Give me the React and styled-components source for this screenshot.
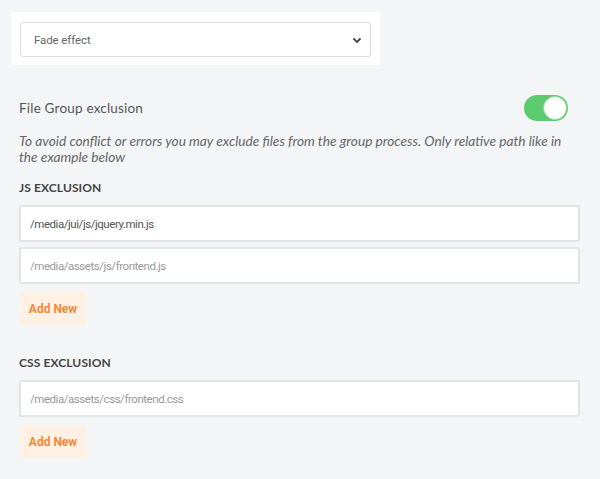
import React from "react";
import styled, { createGlobalStyle } from "styled-components";

const GlobalStyle = createGlobalStyle`
  html, body {
    margin: 0;
    padding: 0;
    background: #f4f5f7;
  }
  body {
    font-family: Lato, "Open Sans", sans-serif;
  }
`;

const Page = styled.div`
  width: 600px;
  height: 479px;
  box-sizing: border-box;
  padding: 12px 20px 0 19px;
  display: flex;
  flex-direction: column;
`;

const SelectCard = styled.div`
  margin-left: -8px;
  width: 369px;
  box-sizing: border-box;
  padding: 10px 9px 8px 9px;
  background: #fff;
`;

const SelectBox = styled.div`
  height: 35px;
  box-sizing: border-box;
  border: 1px solid #dcdcdc;
  border-radius: 3px;
  display: flex;
  align-items: center;
  justify-content: space-between;
  padding: 0 8px 0 13px;
  font-family: Roboto, sans-serif;
  font-size: 11.5px;
  letter-spacing: -0.1px;
  color: #666;
  background: #fff;
`;

const SwitchRow = styled.div`
  margin-top: 30px;
  display: flex;
  align-items: center;
  justify-content: space-between;
  padding-right: 12px;
`;

const Label = styled.div`
  font-size: 13.5px;
  color: #555;
  letter-spacing: 0.2px;
`;

const Toggle = styled.div`
  width: 44px;
  height: 26px;
  border-radius: 13px;
  background: #5ccb6f;
  position: relative;
  &::after {
    content: "";
    position: absolute;
    right: 1px;
    top: 1px;
    width: 22px;
    height: 22px;
    border-radius: 50%;
    background: #fff;
    border: 1px solid #8fdc9b;
  }
`;

const Help = styled.p`
  margin: 12px 0 0 0;
  max-width: 550px;
  font-style: italic;
  font-size: 13.7px;
  line-height: 16px;
  color: #666;
`;

const SectionTitle = styled.div`
  margin-top: ${(p) => p.$top}px;
  font-size: 12px;
  font-weight: 700;
  color: #444;
  letter-spacing: 0.1px;
`;

const Inputs = styled.div`
  display: flex;
  flex-direction: column;
  gap: 5px;
  margin-top: 10px;
`;

const Field = styled.div`
  height: 37px;
  box-sizing: border-box;
  border: 2px solid #e3e4e6;
  border-radius: 2px;
  background: #fff;
  display: flex;
  align-items: center;
  padding-left: 9px;
  font-family: Roboto, sans-serif;
  font-size: 11.5px;
  letter-spacing: -0.45px;
  color: ${(p) => (p.$placeholder ? "#9a9a9a" : "#555")};
`;

const AddButton = styled.button`
  align-self: flex-start;
  margin-top: 8px;
  margin-left: 1px;
  width: 66px;
  height: 33px;
  border: none;
  border-radius: 3px;
  background: #fff0e4;
  color: #f5883a;
  font-family: Roboto, sans-serif;
  font-weight: 700;
  font-size: 12px;
  padding: 0;
`;

function Chevron() {
  return (
    <svg width="10" height="8" viewBox="0 0 10 8">
      <path d="M1.5 2.5 L5 6 L8.5 2.5" fill="none" stroke="#444" strokeWidth="1.8" />
    </svg>
  );
}

export default function App() {
  return (
    <>
      <GlobalStyle />
      <Page>
        <SelectCard>
          <SelectBox>
            <span>Fade effect</span>
            <Chevron />
          </SelectBox>
        </SelectCard>
        <SwitchRow>
          <Label>File Group exclusion</Label>
          <Toggle />
        </SwitchRow>
        <Help>
          To avoid conflict or errors you may exclude files from the group process. Only relative path like in the
          example below
        </Help>
        <SectionTitle $top={15}>JS EXCLUSION</SectionTitle>
        <Inputs>
          <Field>/media/jui/js/jquery.min.js</Field>
          <Field $placeholder>/media/assets/js/frontend.js</Field>
        </Inputs>
        <AddButton>Add New</AddButton>
        <SectionTitle $top={30}>CSS EXCLUSION</SectionTitle>
        <Inputs>
          <Field $placeholder>/media/assets/css/frontend.css</Field>
        </Inputs>
        <AddButton>Add New</AddButton>
      </Page>
    </>
  );
}
